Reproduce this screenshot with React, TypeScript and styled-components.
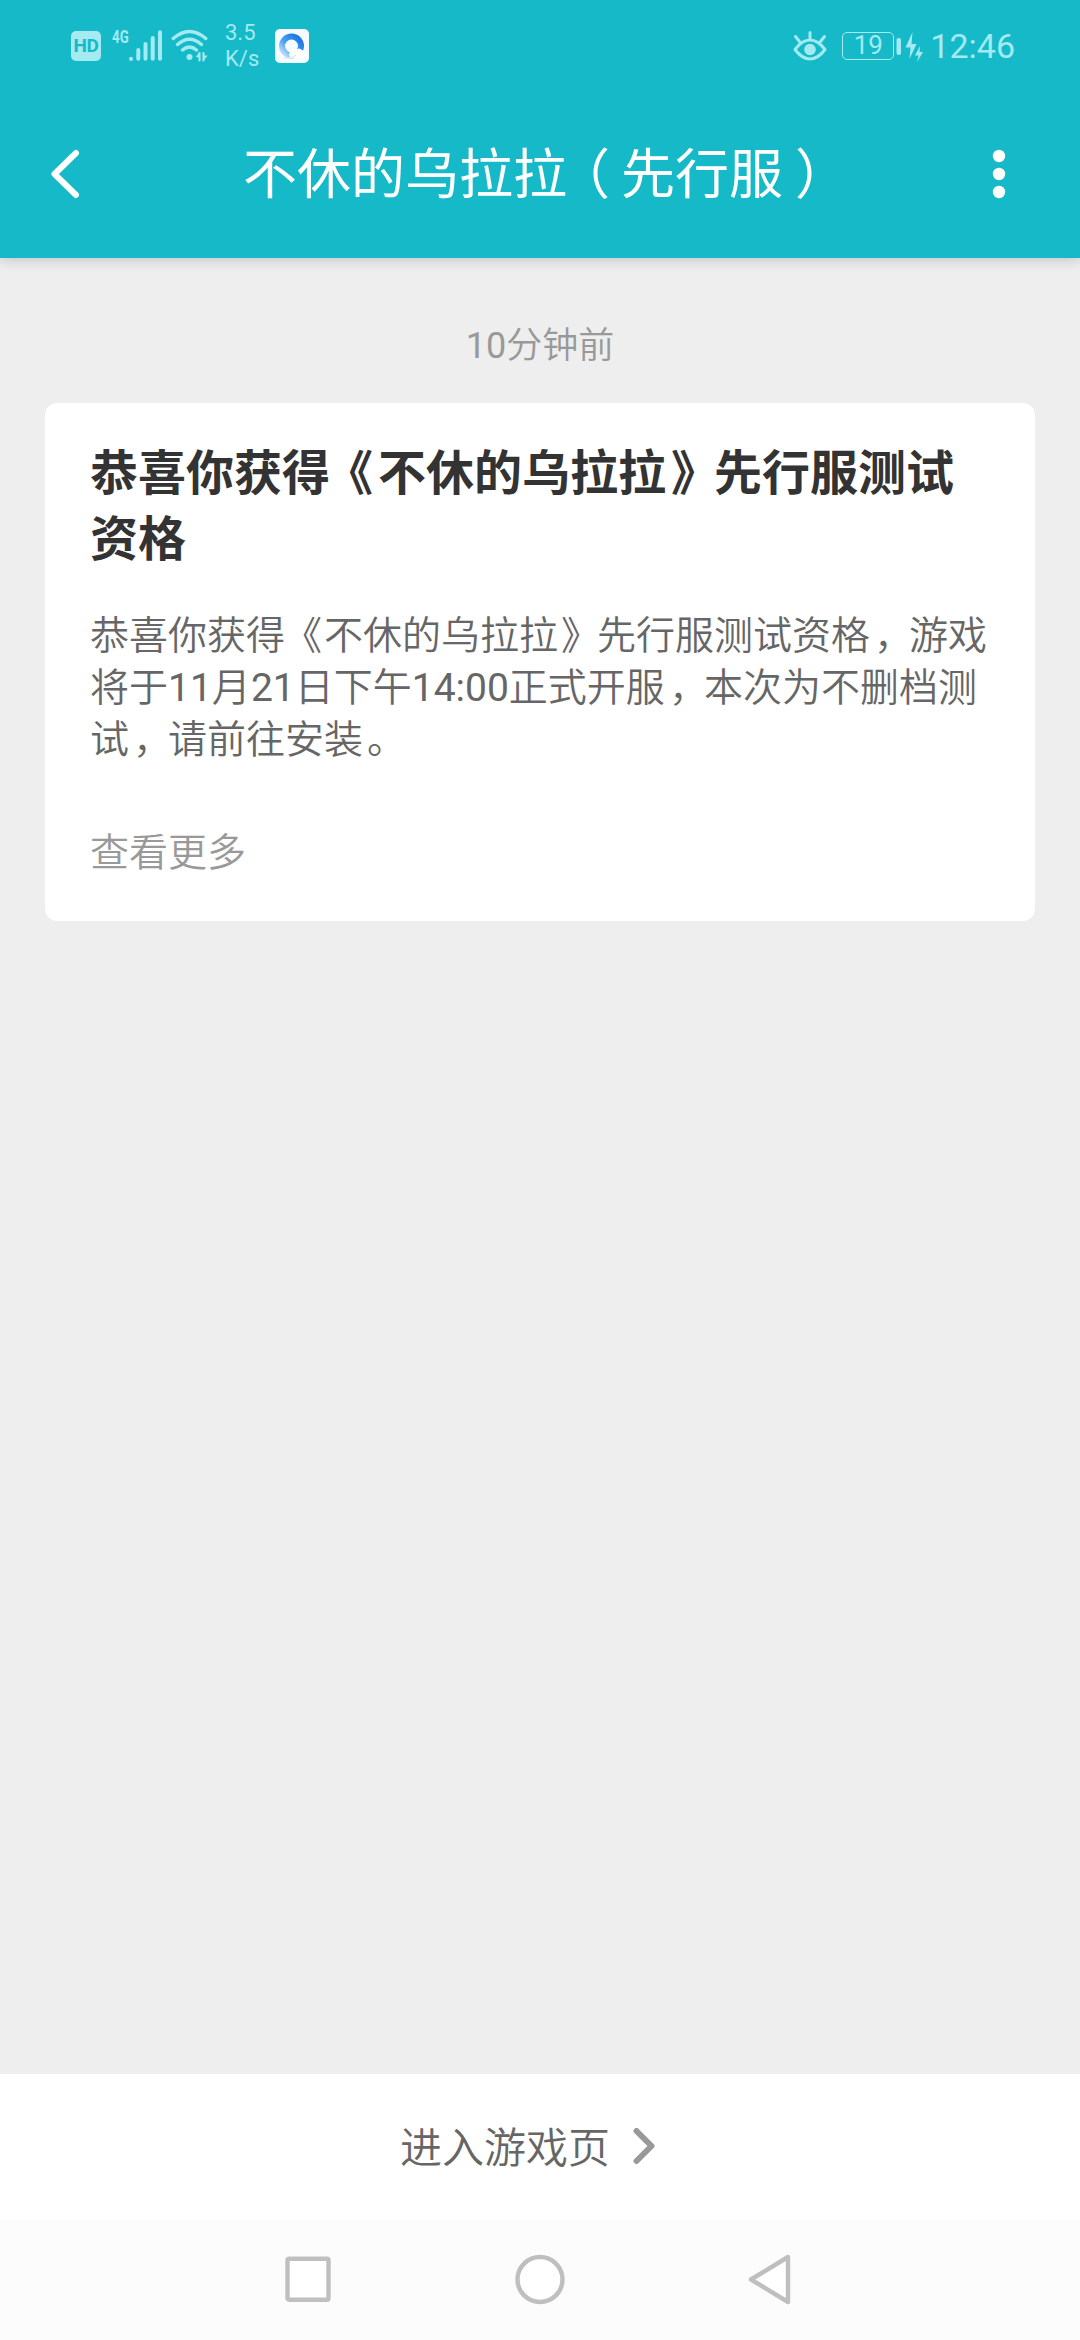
import React from "react";
import styled, { createGlobalStyle } from "styled-components";

const teal = "#15b9c8";
const tint = "#a3eaf1";

const GlobalStyle = createGlobalStyle`
  *, *::before, *::after { box-sizing: border-box; }
  body {
    margin: 0;
    background: #eeeeee;
    font-family: Roboto, "Noto Sans CJK SC", sans-serif;
  }
  button { font: inherit; border: 0; background: none; padding: 0; margin: 0; }
  svg { display: block; }
`;

const Screen = styled.div`
  width: 1080px;
  height: 2340px;
  display: flex;
  flex-direction: column;
  background: #eeeeee;
  overflow: hidden;
`;

const Header = styled.header`
  flex: none;
  height: 258px;
  background: ${teal};
  color: #fff;
  box-shadow: 0 2px 12px rgba(0, 0, 0, 0.18);
`;

const StatusBar = styled.div`
  height: 92px;
  display: flex;
  justify-content: space-between;
  padding: 0 65px 0 71px;
  color: ${tint};
`;

const StatusGroup = styled.div`
  display: flex;
  align-items: center;
`;

const HdBadge = styled.span`
  width: 30px;
  height: 30px;
  border-radius: 5px;
  background: ${tint};
  color: ${teal};
  font-size: 19px;
  font-weight: 700;
  line-height: 30px;
  text-align: center;
  letter-spacing: -0.5px;
`;

const NetworkType = styled.span`
  margin-left: 11px;
  width: 17px;
  height: 38px;
  font-size: 19px;
  font-weight: 700;
  line-height: 19px;
  transform: scaleX(0.7);
  transform-origin: left center;
`;

const StatusIcon = styled.svg<{ $left: number }>`
  flex: none;
  margin-left: ${(p) => p.$left}px;
`;

const Speed = styled.span`
  display: flex;
  flex-direction: column;
  margin-left: 16px;
  width: 50px;
  font-size: 22px;
  line-height: 26px;
`;

const Battery = styled.span`
  width: 52px;
  height: 28px;
  margin-left: 15px;
  border: 1.5px solid ${tint};
  border-radius: 5px;
  font-size: 26px;
  line-height: 25px;
  text-align: center;
`;

const Clock = styled.span`
  margin-left: 6px;
  font-size: 34px;
  line-height: 40px;
`;

const TitleBar = styled.div`
  height: 166px;
  display: grid;
  grid-template-columns: 120px 1fr 120px;
  align-items: center;
`;

const BarButton = styled.button<{ $before?: number; $after?: number }>`
  height: 100px;
  display: flex;
  align-items: center;
  justify-content: center;
  padding: 0 ${(p) => p.$after ?? 0}px 2px ${(p) => p.$before ?? 0}px;
`;

const PageTitle = styled.h1`
  margin: 0;
  padding-top: 2px;
  font-size: 54px;
  font-weight: 400;
  line-height: 80px;
  text-align: center;
  white-space: nowrap;
`;

const Nudge = styled.span<{ $x: number }>`
  margin-left: ${(p) => p.$x}px;
  margin-right: ${(p) => -p.$x}px;
`;

const Digits = styled.span`
  font-weight: 400;
`;

const Feed = styled.main`
  flex: 1;
  padding: 60px 45px 0;
`;

const Time = styled.time`
  display: block;
  height: 85px;
  font-size: 36px;
  font-weight: 350;
  line-height: 56px;
  text-align: center;
  color: #999;
`;

const Card = styled.article`
  height: 518px;
  padding: 38px 45px 0;
  border-radius: 12px;
  background: #fff;
`;

const CardTitle = styled.h2`
  margin: 0;
  font-size: 48px;
  font-weight: 700;
  line-height: 66px;
  color: #333;
`;

const CardText = styled.p`
  margin: 37px 0 0;
  font-size: 39px;
  font-weight: 350;
  line-height: 52px;
  color: #666;
`;

const More = styled.a`
  display: block;
  margin-top: 61px;
  font-size: 39px;
  font-weight: 350;
  line-height: 52px;
  color: #999;
`;

const EnterButton = styled.button`
  flex: none;
  height: 145px;
  display: flex;
  align-items: center;
  justify-content: center;
  gap: 23px;
  padding-right: 25px;
  background: #fff;
`;

const EnterLabel = styled.span`
  padding-top: 4px;
  color: #666;
  font-size: 42px;
  font-weight: 350;
  line-height: 60px;
`;

const SystemNav = styled.nav`
  flex: none;
  height: 121px;
  display: flex;
  justify-content: center;
  align-items: center;
  gap: 180px;
  background: #fcfcfc;
`;

const NavKey = styled.button`
  width: 52px;
  height: 52px;
`;

const navStroke = { fill: "#fff", stroke: "#bfbfbf", strokeWidth: 4.4, strokeLinejoin: "round" as const };

function SignalIcon() {
  return (
    <StatusIcon $left={0} width="34" height="32" viewBox="0 0 34 32" stroke={tint} strokeWidth="4" strokeLinecap="round">
      <path d="M2 28.800v.1M9.300 20v8.800M16.500 14v14.800M23.700 8v20.800M31 2.300v26.500" />
    </StatusIcon>
  );
}

function WifiIcon() {
  return (
    <StatusIcon $left={8} width="38" height="34" viewBox="0 0 38 34" fill="none" stroke={tint} strokeWidth="3.4" strokeLinecap="round">
      <path d="M2.200 9.500Q18.500-4.500 34.800 9.500M6.500 15.500Q18.500 5 30.500 15.500M11.500 21Q18.500 15 25.500 21" />
      <circle cx="18.500" cy="28" r="3" fill={tint} stroke="none" />
      <path d="M28.500 24v7.500M32.500 24v7.500" strokeWidth="2.200" />
      <path d="M24.500 28l4-4.500v5zM36.700 26.500l-4 5v-5z" fill={tint} stroke="none" />
    </StatusIcon>
  );
}

function BrowserIcon() {
  return (
    <StatusIcon $left={0} width="34" height="34" viewBox="0 0 34 34">
      <defs>
        <linearGradient id="ring" x1="0" y1="1" x2="1" y2="0">
          <stop offset="0" stopColor="#d5e7fa" />
          <stop offset="0.400" stopColor="#4aa5f5" />
          <stop offset="1" stopColor="#176fe0" />
        </linearGradient>
      </defs>
      <rect width="34" height="34" rx="5" fill="#f5fbfe" />
      <circle cx="16.500" cy="17" r="9.500" fill="none" stroke="url(#ring)" strokeWidth="6" />
      <path d="M20 21q4-3 7 0 3 1 4 5 -1 3-4 3H17q-3-1-3-4 1-3 6-4z" fill="#fff" />
      <path d="M9 28q6 3 12-2" fill="none" stroke="#dce8f3" strokeWidth="1.500" />
    </StatusIcon>
  );
}

function EyeIcon() {
  return (
    <StatusIcon $left={0} width="34" height="32" viewBox="0 0 34 32" fill="none" stroke={tint} strokeWidth="3" strokeLinecap="round">
      <path d="M2 19.500Q9 10 17 10T32 19.500Q25 29 17 29T2 19.500z" strokeLinejoin="round" />
      <circle cx="17" cy="19.500" r="5.800" fill={tint} stroke="none" />
      <path d="M17 2.500v6M2.500 6.500l4 5M31.500 6.500l-4 5" />
    </StatusIcon>
  );
}

function ChargeIcon() {
  return (
    <StatusIcon $left={2} width="28" height="34" viewBox="0 0 28 34" fill={tint}>
      <rect x="0.500" y="9" width="4.500" height="17" rx="2" />
      <path d="M16.500 3L9.500 18.500h5L13.500 30l7-15h-5zM24 17l-5 9.500h3.500L21 33l6-10h-3.500z" />
    </StatusIcon>
  );
}

export default function App() {
  return (
    <>
      <GlobalStyle />
      <Screen>
        <Header>
          <StatusBar>
            <StatusGroup>
              <HdBadge>HD</HdBadge>
              <NetworkType>4G</NetworkType>
              <SignalIcon />
              <WifiIcon />
              <Speed>
                <span>3.5</span>
                <span>K/s</span>
              </Speed>
              <BrowserIcon />
            </StatusGroup>
            <StatusGroup>
              <EyeIcon />
              <Battery>19</Battery>
              <ChargeIcon />
              <Clock>12:46</Clock>
            </StatusGroup>
          </StatusBar>
          <TitleBar>
            <BarButton aria-label="返回" $before={9}>
              <svg width="30" height="50" viewBox="0 0 30 50" fill="none" stroke="#fff" strokeWidth="6" strokeLinecap="round" strokeLinejoin="round">
                <path d="M26 4L4.500 25L26 46" />
              </svg>
            </BarButton>
            <PageTitle>
              不休的乌拉拉<Nudge $x={-11}>（</Nudge>先行服<Nudge $x={12}>）</Nudge>
            </PageTitle>
            <BarButton aria-label="更多选项" $after={42}>
              <svg width="14" height="50" viewBox="0 0 14 50" fill="#fff">
                <circle cx="7" cy="7" r="6.200" />
                <circle cx="7" cy="25" r="6.200" />
                <circle cx="7" cy="43" r="6.200" />
              </svg>
            </BarButton>
          </TitleBar>
        </Header>
        <Feed>
          <Time><Digits>10</Digits>分钟前</Time>
          <Card>
            <CardTitle>
              恭喜你获得<Nudge $x={-5}>《</Nudge>不休的乌拉拉<Nudge $x={5}>》</Nudge>先行服测试资格
            </CardTitle>
            <CardText>
              恭喜你获得<Nudge $x={-2}>《</Nudge>不休的乌拉拉<Nudge $x={3}>》</Nudge>先行服测试资格<Nudge $x={4}>，</Nudge>游戏将于<Digits>11</Digits>月<Digits>21</Digits>日下午<Digits>14:00</Digits>正式开服<Nudge $x={4}>，</Nudge>本次为不删档测试<Nudge $x={4}>，</Nudge>请前往安装<Nudge $x={4}>。</Nudge>
            </CardText>
            <More>查看更多</More>
          </Card>
        </Feed>
        <EnterButton>
          <EnterLabel>进入游戏页</EnterLabel>
          <svg width="22" height="38" viewBox="0 0 22 38" fill="none" stroke="#999" strokeWidth="6" strokeLinecap="round" strokeLinejoin="round">
            <path d="M3.500 3L18.500 18L3.500 33" />
          </svg>
        </EnterButton>
        <SystemNav>
          <NavKey aria-label="最近任务">
            <svg width="52" height="52" viewBox="0 0 52 52" {...navStroke}>
              <rect x="5.500" y="4.700" width="41" height="41" rx="1.500" />
            </svg>
          </NavKey>
          <NavKey aria-label="主屏幕">
            <svg width="52" height="52" viewBox="0 0 52 52" {...navStroke}>
              <circle cx="26" cy="25.500" r="22.500" />
            </svg>
          </NavKey>
          <NavKey aria-label="返回上一级">
            <svg width="52" height="52" viewBox="0 0 52 52" {...navStroke}>
              <path d="M42 3V48L5 25.500z" />
            </svg>
          </NavKey>
        </SystemNav>
      </Screen>
    </>
  );
}
